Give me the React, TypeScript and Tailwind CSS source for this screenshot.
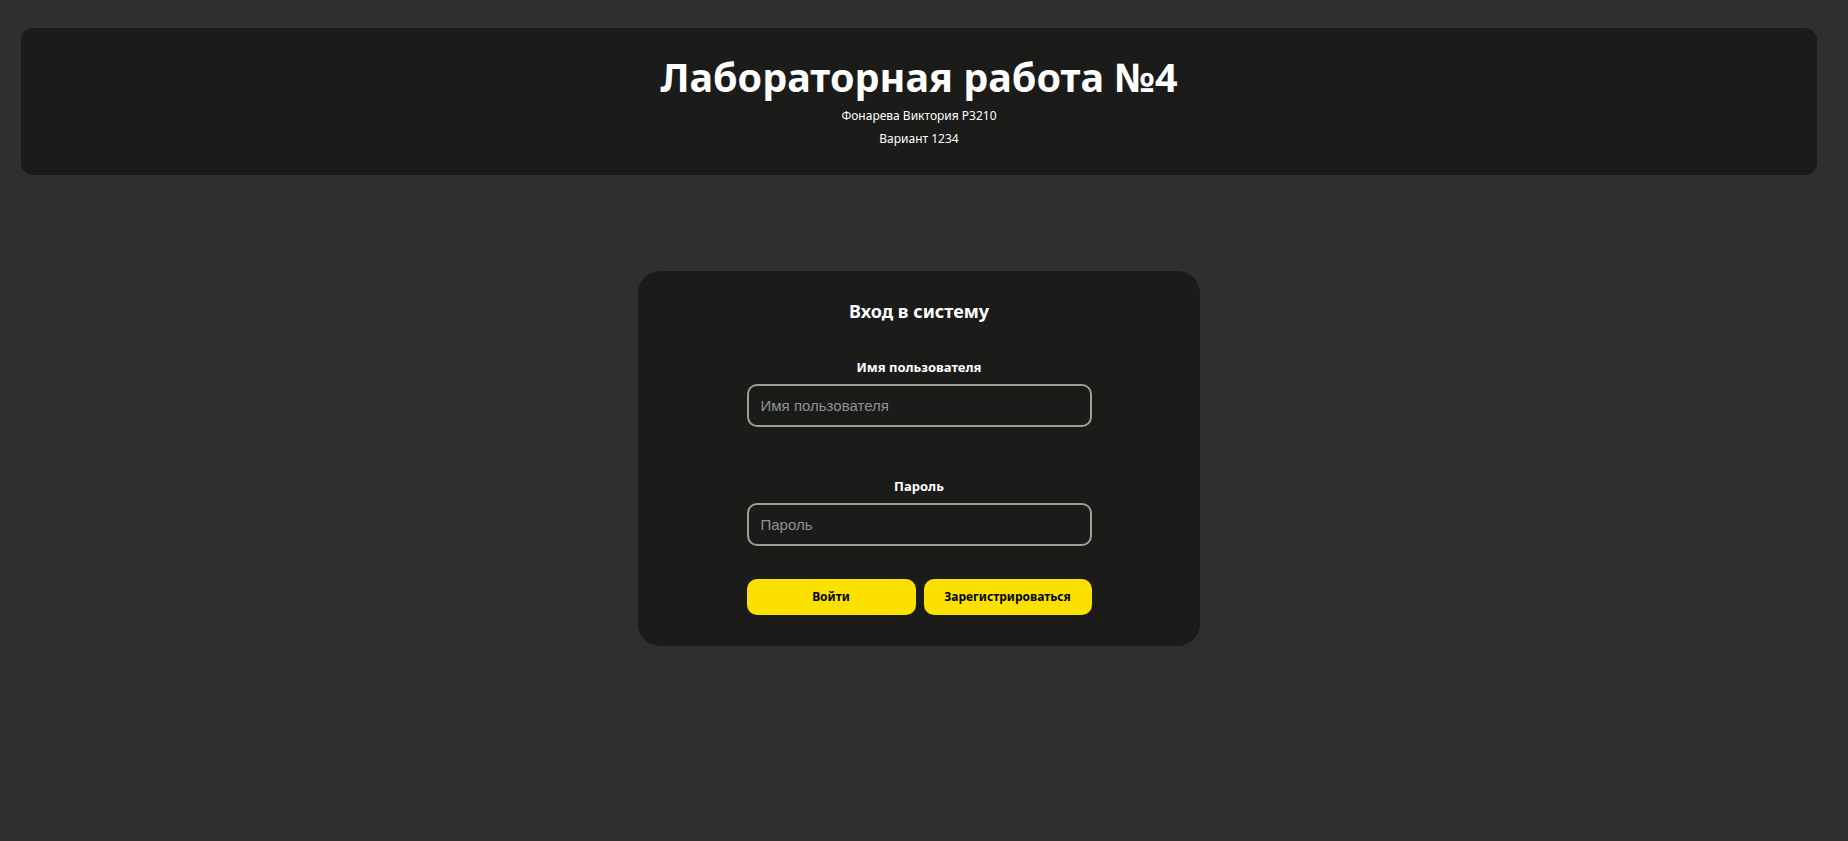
import React from 'react';

const font = { fontFamily: '"Noto Sans", "Open Sans", sans-serif' };

const Field = ({ label, type = 'text' }: { label: string; type?: string }) => (
    <div className="flex flex-col items-center">
        <label className="text-[13px] leading-[18px] font-bold text-white">{label}</label>
        <input
            type={type}
            placeholder={label}
            className="mt-[8px] w-[345px] h-[43px] rounded-[10px] border-2 border-[#a29c93] bg-transparent px-[12px] text-[15px] text-white placeholder:text-[#8b929a] outline-none"
            style={{ fontFamily: '"Liberation Sans", Arial, sans-serif' }}
        />
    </div>
);

export default function App() {
    return (
        <div className="min-h-screen bg-[#302f2d] pt-[28px]" style={font}>
            <div className="ml-[21px] w-[1796px] flex flex-col items-center">
                <header className="w-full h-[147px] rounded-[12px] bg-[#1b1b19] flex flex-col items-center pt-[32px] text-white">
                    <h1 className="text-[39.5px] leading-[34px] font-bold">Лабораторная работа №4</h1>
                    <p className="mt-[13px] text-[12px] leading-[18px]">Фонарева Виктория Р3210</p>
                    <p className="mt-[5px] text-[12px] leading-[18px]">Вариант 1234</p>
                </header>

                <main className="mt-[96px] w-[562px] h-[375px] rounded-[22px] bg-[#1b1b19] flex flex-col items-center pt-[27px]">
                    <h2 className="text-[18px] leading-[26px] font-bold text-white">Вход в систему</h2>
                    <div className="mt-[34px]">
                        <Field label="Имя пользователя" />
                    </div>
                    <div className="mt-[50px]">
                        <Field label="Пароль" type="password" />
                    </div>
                    <div className="mt-[33px] flex gap-[8px]">
                        <button className="w-[169px] h-[36px] rounded-[10px] bg-[#fce000] text-[12px] font-bold text-black">
                            Войти
                        </button>
                        <button className="w-[168px] h-[36px] rounded-[10px] bg-[#fce000] text-[12px] font-bold text-black">
                            Зарегистрироваться
                        </button>
                    </div>
                </main>
            </div>
        </div>
    );
}
